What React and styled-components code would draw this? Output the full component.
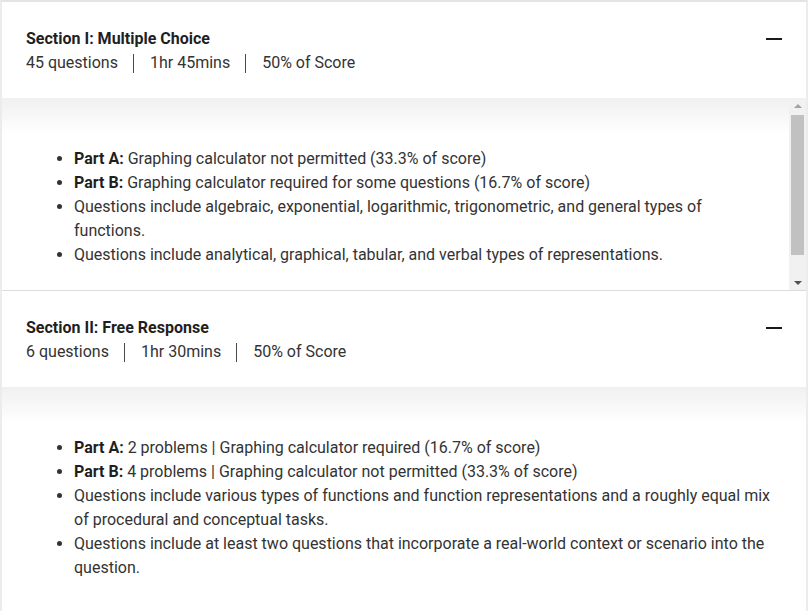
import React from "react";
import styled, { createGlobalStyle } from "styled-components";

const GlobalStyle = createGlobalStyle`
  html, body {
    margin: 0;
    padding: 0;
    background: #ffffff;
  }
  body {
    font-family: Roboto, "Liberation Sans", Arial, sans-serif;
    color: #333333;
  }
`;

const sections = [
  {
    title: "Section I: Multiple Choice",
    meta: ["45 questions", "1hr 45mins", "50% of Score"],
    scroll: true,
    items: [
      { label: "Part A:", text: "Graphing calculator not permitted (33.3% of score)" },
      { label: "Part B:", text: "Graphing calculator required for some questions (16.7% of score)" },
      {
        text: "Questions include algebraic, exponential, logarithmic, trigonometric, and general types of functions.",
      },
      { text: "Questions include analytical, graphical, tabular, and verbal types of representations." },
    ],
  },
  {
    title: "Section II: Free Response",
    meta: ["6 questions", "1hr 30mins", "50% of Score"],
    scroll: false,
    items: [
      { label: "Part A:", text: "2 problems | Graphing calculator required (16.7% of score)" },
      { label: "Part B:", text: "4 problems | Graphing calculator not permitted (33.3% of score)" },
      {
        text: "Questions include various types of functions and function representations and a roughly equal mix of procedural and conceptual tasks.",
      },
      {
        text: "Questions include at least two questions that incorporate a real-world context or scenario into the question.",
      },
    ],
  },
];

function App() {
  return (
    <>
      <GlobalStyle />
      <Frame>
        {sections.map((section) => (
          <Section key={section.title} $divided={section.scroll}>
            <Header>
              <div>
                <Title>{section.title}</Title>
                <Meta>
                  {section.meta.map((m, i) => (
                    <MetaItem key={m} $first={i === 0}>
                      {m}
                    </MetaItem>
                  ))}
                </Meta>
              </div>
              <Toggle aria-label="Collapse" />
            </Header>
            <Body $scroll={section.scroll}>
              <Viewport>
                <List>
                  {section.items.map((item, i) => (
                    <Item key={i}>
                      {item.label && <strong>{item.label}</strong>}
                      {item.label ? " " : ""}
                      {item.text}
                    </Item>
                  ))}
                </List>
              </Viewport>
              {section.scroll && (
                <Track>
                  <Arrow $dir="up" />
                  <Thumb />
                  <TrackRest />
                  <Arrow $dir="down" />
                </Track>
              )}
            </Body>
          </Section>
        ))}
      </Frame>
    </>
  );
}

const Frame = styled.div`
  border-top: 2px solid #e4e4e4;
  border-left: 2px solid #ececec;
  border-right: 2px solid #ececec;
  min-height: 609px;
  background: #ffffff;
`;

const Section = styled.section`
  border-bottom: ${(p) => (p.$divided ? "1px solid #dcdcdc" : "none")};
`;

const Header = styled.div`
  display: flex;
  justify-content: space-between;
  align-items: flex-start;
  padding: 25px 24px 23px 24px;
  background: #ffffff;
`;

const Title = styled.div`
  font-size: 16px;
  line-height: 24px;
  font-weight: 700;
  color: #1f1f1f;
`;

const Meta = styled.div`
  display: flex;
  align-items: center;
  font-size: 16px;
  line-height: 24px;
  color: #333333;
`;

const MetaItem = styled.span`
  display: flex;
  align-items: center;
  &::before {
    content: "";
    display: ${(p) => (p.$first ? "none" : "block")};
    width: 1px;
    height: 19px;
    background: #4a4a4a;
    margin: 0 16px 0 15px;
  }
`;

const Toggle = styled.span`
  display: block;
  width: 16px;
  height: 2px;
  margin-top: 11px;
  background: #1a1a1a;
`;

const Body = styled.div`
  display: flex;
  background: linear-gradient(to bottom, #f0f0f0 0px, #ffffff 36px);
  height: ${(p) => (p.$scroll ? "192px" : "auto")};
  overflow: hidden;
`;

const Viewport = styled.div`
  flex: 1;
  min-width: 0;
  padding: 49px 24px 48px 24px;
`;

const List = styled.ul`
  margin: 0;
  padding: 0 0 0 48px;
  list-style: disc;
`;

const Item = styled.li`
  font-size: 16px;
  line-height: 24px;
  color: #333333;
  strong {
    font-weight: 700;
    color: #1f1f1f;
  }
`;

const Track = styled.div`
  width: 17px;
  flex: none;
  display: flex;
  flex-direction: column;
  align-items: center;
  background: #f1f1f1;
`;

const Arrow = styled.div`
  flex: none;
  width: 17px;
  height: 17px;
  display: flex;
  align-items: center;
  justify-content: center;
  &::before {
    content: "";
    width: 0;
    height: 0;
    border-left: 4px solid transparent;
    border-right: 4px solid transparent;
    ${(p) =>
      p.$dir === "up"
        ? "border-bottom: 4px solid #a3a3a3; margin-top: -2px;"
        : "border-top: 4px solid #505050; margin-top: 2px;"}
  }
`;

const Thumb = styled.div`
  flex: none;
  width: 13px;
  height: 140px;
  background: #c1c1c1;
`;

const TrackRest = styled.div`
  flex: 1;
`;

export default App;
